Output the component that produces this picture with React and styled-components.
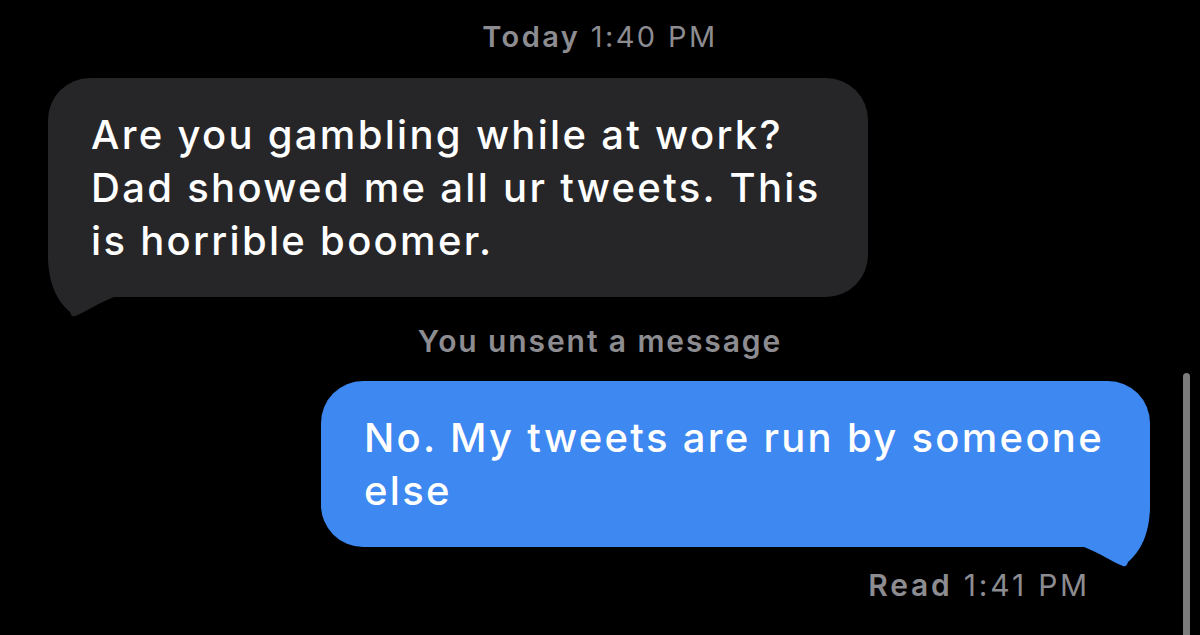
import React from 'react';
import styled, {createGlobalStyle} from 'styled-components';

const GlobalStyle = createGlobalStyle`
    html, body {
        margin: 0;
        padding: 0;
        background: #000;
    }
    body {
        width: 1200px;
        height: 635px;
        overflow: hidden;
        font-family: Inter, 'Noto Sans', sans-serif;
        -webkit-font-smoothing: antialiased;
    }
`

function Tail({flip, color}) {
    return (
        <TailSvg $flip={flip} width="66" height="64" viewBox="0 0 66 64">
            <path
                d="M0 0 C0 28, 9 46, 22 57 C23 60, 24 62, 27 61 C38 57, 50 48, 66 42 L66 0 Z"
                fill={color}/>
        </TailSvg>
    );
}

function App() {
    return (
        <Screen>
            <GlobalStyle/>
            <Stamp>
                <b>Today</b> 1:40 PM
            </Stamp>
            <Row>
                <Bubble $bg="#262628" $width={820}>
                    Are you gambling while at work?<br/>
                    Dad showed me all ur tweets. This<br/>
                    is horrible boomer.
                    <Tail color="#262628"/>
                </Bubble>
            </Row>
            <Notice>You unsent a message</Notice>
            <Row $right>
                <Bubble $bg="#3d88f1" $width={829}>
                    No. My tweets are run by someone<br/>
                    else
                    <Tail flip color="#3d88f1"/>
                </Bubble>
            </Row>
            <Receipt>
                <b>Read</b> 1:41 PM
            </Receipt>
            <ScrollThumb/>
        </Screen>
    );
}

export default App;

const Screen = styled.div`
    position: relative;
    width: 1200px;
    height: 635px;
    box-sizing: border-box;
    padding: 19px 50px 0 48px;
    display: flex;
    flex-flow: column nowrap;
    color: #fff;
`

const Stamp = styled.div`
    text-align: center;
    font-size: 29px;
    line-height: 36px;
    letter-spacing: 2.4px;
    color: #8c8c91;
    font-weight: 400;
    padding-left: 2px;

    b {
        font-weight: 600;
    }
`

const Row = styled.div`
    display: flex;
    justify-content: ${p => p.$right ? 'flex-end' : 'flex-start'};
    margin-top: ${p => p.$right ? '22px' : '23px'};
`

const Bubble = styled.div`
    position: relative;
    box-sizing: border-box;
    width: ${p => p.$width}px;
    background: ${p => p.$bg};
    border-radius: 42px;
    padding: 30px 30px 30px 43px;
    font-size: 40px;
    line-height: 53px;
    font-weight: 500;
    letter-spacing: 2.3px;
    color: #fff;
    white-space: nowrap;
`

const TailSvg = styled.svg`
    position: absolute;
    bottom: -22px;
    ${p => p.$flip ? 'right: 0; transform: scaleX(-1);' : 'left: 0;'}
`

const Notice = styled.div`
    text-align: center;
    margin-top: 26px;
    font-size: 30px;
    line-height: 36px;
    font-weight: 600;
    letter-spacing: 1.9px;
    color: #8c8c91;
    padding-left: 2px;
`

const Receipt = styled.div`
    text-align: right;
    margin-top: 20px;
    padding-right: 60px;
    font-size: 30px;
    line-height: 36px;
    letter-spacing: 2.8px;
    color: #8c8c91;

    b {
        font-weight: 600;
    }
`

const ScrollThumb = styled.div`
    position: absolute;
    right: 10px;
    top: 373px;
    bottom: -20px;
    width: 7px;
    border-radius: 4px;
    background: #7c7c7c;
`
